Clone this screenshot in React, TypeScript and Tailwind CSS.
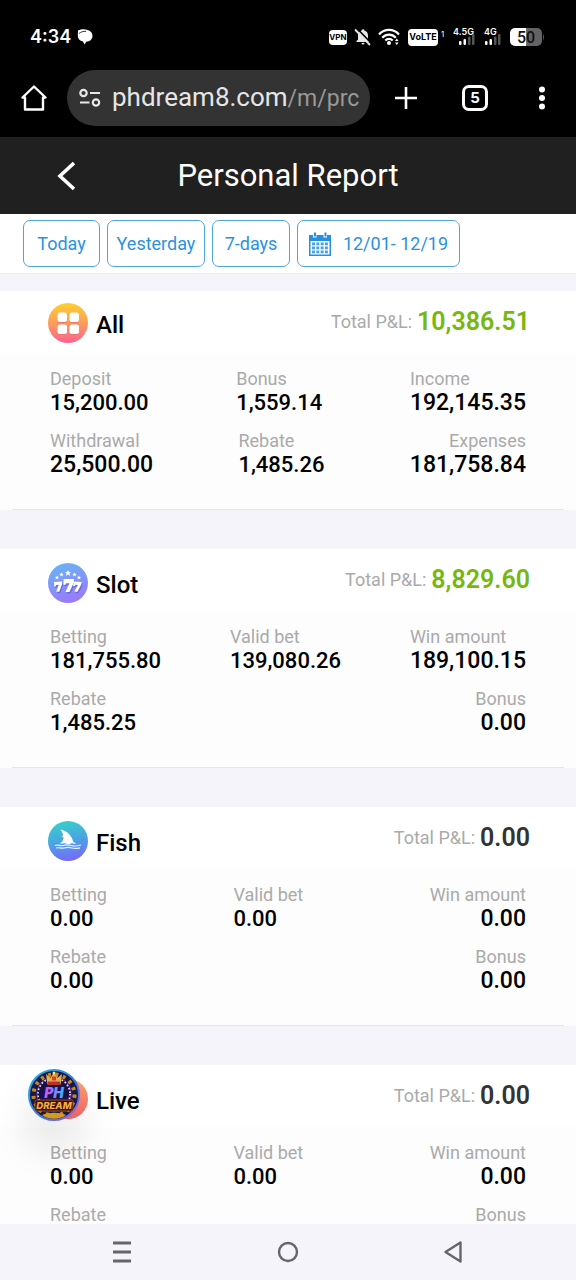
import type { ReactNode } from "react";

type Item = { label: string; value?: string; large?: boolean; align?: "left" | "right" };

interface Section {
  name: string;
  total: string;
  positive?: boolean;
  icon: ReactNode;
  rows: Item[][];
}

function AllIcon() {
  return (
    <svg className="size-10" viewBox="0 0 40 40" aria-hidden>
      <defs>
        <linearGradient id="all-bg" x1="0" y1="0" x2="0" y2="1">
          <stop offset="0" stopColor="#fdd02f" />
          <stop offset="0.5" stopColor="#fc9d5c" />
          <stop offset="1" stopColor="#fb6291" />
        </linearGradient>
      </defs>
      <circle cx="20" cy="20" r="20" fill="url(#all-bg)" />
      <g fill="#e9686a" opacity="0.6">
        <rect x="9.500" y="11" width="9.500" height="9.500" rx="2.500" />
        <rect x="21.500" y="11" width="9.500" height="9.500" rx="2.500" />
        <rect x="9.500" y="23" width="9.500" height="9" rx="2.500" />
        <rect x="21.500" y="23" width="9.500" height="9" rx="2.500" />
      </g>
      <g fill="#fff">
        <rect x="9.500" y="9.500" width="9.500" height="9.500" rx="2.500" />
        <rect x="21.500" y="9.500" width="9.500" height="9.500" rx="2.500" />
        <rect x="9.500" y="21.500" width="9.500" height="9.500" rx="2.500" />
        <rect x="21.500" y="21.500" width="9.500" height="9.500" rx="2.500" />
      </g>
    </svg>
  );
}

const SEVEN = "M0 0h8v2.500L4.600 10H1.500L4.600 3.200H2L1.600 4.400H0z";
const STAR = "M0-3 .9-.9 3-.8 1.400.6 2 2.800 0 1.600-2 2.800-1.400.6-3-.8-.9-.9z";

function SlotIcon() {
  return (
    <svg className="size-10" viewBox="0 0 40 40" aria-hidden>
      <defs>
        <linearGradient id="slot-bg" x1="0.3" y1="0" x2="0.6" y2="1">
          <stop offset="0" stopColor="#69b3f5" />
          <stop offset="1" stopColor="#9c78fc" />
        </linearGradient>
      </defs>
      <circle cx="20" cy="20" r="20" fill="url(#slot-bg)" />
      <g fill="#5b55c8" opacity="0.6" transform="translate(1 1.500)">
        <path d={SEVEN} transform="translate(6 19) rotate(-4)" />
        <path d={SEVEN} transform="translate(15.500 16) scale(1.300)" />
        <path d={SEVEN} transform="translate(25.500 18.500) rotate(4)" />
      </g>
      <g fill="#fff">
        <path d={SEVEN} transform="translate(6 19) rotate(-4)" />
        <path d={SEVEN} transform="translate(15.500 16) scale(1.300)" />
        <path d={SEVEN} transform="translate(25.500 18.500) rotate(4)" />
        <path d={STAR} transform="translate(20 10)" />
        <path d={STAR} transform="translate(13.500 11.500) scale(.7)" />
        <path d={STAR} transform="translate(26.500 11.500) scale(.7)" />
        <path d={STAR} transform="translate(9 14.500) scale(.7)" />
        <path d={STAR} transform="translate(31 14.500) scale(.7)" />
      </g>
    </svg>
  );
}

function FishIcon() {
  return (
    <svg className="size-10" viewBox="0 0 40 40" aria-hidden>
      <defs>
        <linearGradient id="fish-bg" x1="0.4" y1="0" x2="0.6" y2="1">
          <stop offset="0" stopColor="#36cfc9" />
          <stop offset="0.5" stopColor="#4ba3e3" />
          <stop offset="1" stopColor="#7a66fa" />
        </linearGradient>
      </defs>
      <circle cx="20" cy="20" r="20" fill="url(#fish-bg)" />
      <path
        d="M12 8.500c7 .8 11.500 6 13.500 12.500 1 .8 2 1.500 3 1.700-2.500.6-4-1-5.500-.2-2 1-3.500 1-5.200 0-1.500-.9-3 .6-6 0 2.500-1.500 3.700-3.500 3.800-6l-2-1.200 1.600-1-.6-2.300c-.6-1.400-1.400-2.500-2.600-3.500z"
        fill="#fff"
      />
      <path
        d="M7 24.500c3-1.500 5 .8 8 0s5-.8 8 0 6 .8 10-.5M8 27c3-1 5 .8 8 0s5-.8 8 0 5 .6 8-.2"
        fill="none"
        stroke="#e8f5ff"
        strokeWidth="1.200"
      />
    </svg>
  );
}

function LiveIcon() {
  return (
    <svg className="size-10" viewBox="0 0 40 40" aria-hidden>
      <defs>
        <linearGradient id="live-bg" x1="0" y1="0" x2="0" y2="1">
          <stop offset="0" stopColor="#fba56c" />
          <stop offset="1" stopColor="#f8656e" />
        </linearGradient>
      </defs>
      <circle cx="20" cy="20" r="20" fill="url(#live-bg)" />
    </svg>
  );
}

const SECTIONS: Section[] = [
  {
    name: "All",
    total: "10,386.51",
    positive: true,
    icon: <AllIcon />,
    rows: [
      [
        { label: "Deposit", value: "15,200.00" },
        { label: "Bonus", value: "1,559.14" },
        { label: "Income", value: "192,145.35", large: true },
      ],
      [
        { label: "Withdrawal", value: "25,500.00", large: true },
        { label: "Rebate", value: "1,485.26" },
        { label: "Expenses", value: "181,758.84", large: true, align: "right" },
      ],
    ],
  },
  {
    name: "Slot",
    total: "8,829.60",
    positive: true,
    icon: <SlotIcon />,
    rows: [
      [
        { label: "Betting", value: "181,755.80" },
        { label: "Valid bet", value: "139,080.26" },
        { label: "Win amount", value: "189,100.15", large: true },
      ],
      [
        { label: "Rebate", value: "1,485.25" },
        { label: "Bonus", value: "0.00", large: true, align: "right" },
      ],
    ],
  },
  {
    name: "Fish",
    total: "0.00",
    icon: <FishIcon />,
    rows: [
      [
        { label: "Betting", value: "0.00" },
        { label: "Valid bet", value: "0.00" },
        { label: "Win amount", value: "0.00", large: true, align: "right" },
      ],
      [
        { label: "Rebate", value: "0.00" },
        { label: "Bonus", value: "0.00", large: true, align: "right" },
      ],
    ],
  },
  {
    name: "Live",
    total: "0.00",
    icon: <LiveIcon />,
    rows: [
      [
        { label: "Betting", value: "0.00" },
        { label: "Valid bet", value: "0.00" },
        { label: "Win amount", value: "0.00", large: true, align: "right" },
      ],
      [{ label: "Rebate" }, { label: "Bonus", align: "right" }],
    ],
  },
];

function Signal({ label }: { label: string }) {
  return (
    <svg className="h-5 w-6" viewBox="0 0 24 20" aria-label={label}>
      <text x="0" y="8" fontSize="9" fontWeight="600" fill="#fff" fontFamily="Inter, sans-serif">
        {label}
      </text>
      <g transform={label === "4G" ? "translate(1 0)" : "translate(6 0)"}>
        <rect x="0" y="14" width="2.500" height="4" rx="1" fill="#fff" />
        <rect x="4.500" y="12" width="2.500" height="6" rx="1" fill="#fff" />
        <rect x="9" y="9.500" width="2.500" height="8.500" rx="1" fill="#555" />
        <rect x="13" y="7" width="2.500" height="11" rx="1" fill="#555" />
      </g>
    </svg>
  );
}

function StatusBar() {
  return (
    <div className="flex h-[70px] items-center justify-between pl-[30px] pr-8 pt-1">
      <div className="flex items-center gap-1.5">
        <span className="font-[Inter,sans-serif] text-lg font-semibold leading-6">4:34</span>
        <svg className="h-4 w-4" viewBox="0 0 16 16" aria-hidden>
          <path d="M1 1.500C5-.3 11-.3 14 3c2 2.300 2 6-.5 8.200-1.300 1-2.700 1.300-4 1.400L7.500 15.500 6 12.600C2.500 12 .6 9.500.8 6z" fill="#fff" />
          <path d="M2 4.500C4 2.800 6 2.300 9 2.300" stroke="#000" strokeWidth="0.8" fill="none" />
        </svg>
      </div>
      <div className="flex items-center">
        <span className="flex h-[15px] w-[18px] items-center justify-center rounded-sm bg-white font-[Inter,sans-serif] text-[8px] font-bold text-black">
          VPN
        </span>
        <svg className="ml-[7px] h-[18px] w-[18px]" viewBox="0 0 18 18" aria-label="Silent">
          <path d="M9 1.200a1.300 1.300 0 0 0-1.300 1.300C5.200 3.200 4 5 4 7.500v4L2.500 13v1h13v-1L14 11.500v-4c0-2.500-1.200-4.300-3.700-5A1.300 1.300 0 0 0 9 1.200zM7.500 15a1.500 1.500 0 0 0 3 0z" fill="#e8e8e8" />
          <path d="M2.500 0 18 16" stroke="#000" strokeWidth="1.600" />
          <path d="M1 1.500 16 17" stroke="#e8e8e8" strokeWidth="1.800" />
        </svg>
        <svg className="ml-1.5 h-[18px] w-[22px]" viewBox="0 0 22 18" fill="none" stroke="#fff" strokeWidth="2.200" aria-label="Wi-Fi">
          <path d="M1 6.500C6.500.4 15.500.4 21 6.500" />
          <path d="M4.200 9.800c4-4.200 9.600-4.200 13.600 0" />
          <path d="M7.300 12.600c2.200-2.300 5.200-2.300 7.400 0" />
          <circle cx="11" cy="15" r="2" fill="#fff" stroke="none" />
          <path d="m17 13 1.800-2.500 1.800 2.500zM17 14.500l1.800 2.500 1.800-2.500z" fill="#fff" stroke="none" />
        </svg>
        <span className="ml-2 flex h-[17px] w-[30px] items-center justify-center rounded-sm bg-white font-[Inter,sans-serif] text-[9px] font-bold text-black">
          VoLTE
        </span>
        <span className="ml-[3px] h-[17px] w-3 font-[Inter,sans-serif] text-[8px] leading-[10px]">1</span>
        <Signal label="4.5G" />
        <span className="ml-[7px] flex">
          <Signal label="4G" />
        </span>
        <svg className="ml-0.5 h-[18px] w-[34px]" viewBox="0 0 34 18" aria-label="Battery 50">
          <path d="M5 0H16.500V18H5a5 5 0 0 1-5-5V5a5 5 0 0 1 5-5z" fill="#fff" />
          <path d="M16.500 0H27a5 5 0 0 1 5 5v8a5 5 0 0 1-5 5H16.500z" fill="#636363" />
          <path d="M33 6c1.200 1.200 1.200 4.800 0 6z" fill="#636363" />
          <text x="7" y="15" fontSize="16" fontWeight="500" fontFamily="Roboto, sans-serif" fill="#111">
            50
          </text>
        </svg>
      </div>
    </div>
  );
}

function BrowserBar() {
  return (
    <div className="flex items-center pb-[11px] pl-5 pr-7">
      <button aria-label="Home" className="flex w-7 justify-center">
        <svg className="h-[26px] w-[26px]" viewBox="0 0 26 26" fill="none" stroke="#fff" strokeWidth="2.400" strokeLinejoin="round" strokeLinecap="round">
          <path d="M1.500 12.500 13 1.500l11.500 11H22v12H4v-12z" />
        </svg>
      </button>
      <button className="ml-[19px] flex h-14 min-w-0 flex-1 items-center rounded-full bg-[#333333] pl-3 pr-1.5 text-left">
        <svg className="h-5 w-[22px] shrink-0" viewBox="0 0 22 20" fill="none" stroke="#e8e8e8" strokeWidth="2.200" aria-hidden>
          <circle cx="4.500" cy="5" r="3.200" />
          <path d="M11 5h10M1 14.500h9.500" />
          <circle cx="17" cy="14.500" r="3.200" />
        </svg>
        <span className="ml-[11px] whitespace-nowrap text-[26px] leading-8 text-[#e6e6e6]">
          phdream8.com<span className="text-[23px] leading-8 text-[#999999]">/m/prc</span>
        </span>
      </button>
      <button aria-label="New tab" className="ml-6">
        <svg className="size-6" viewBox="0 0 24 24" stroke="#fff" strokeWidth="2.600">
          <path d="M12 1v22M1 12h22" />
        </svg>
      </button>
      <button
        aria-label="Tabs"
        className="ml-11 flex size-[26px] items-center justify-center rounded-[7px] border-[3px] border-white font-[Inter,sans-serif] text-[15px] font-bold leading-4"
      >
        5
      </button>
      <button aria-label="More" className="ml-12 flex w-3 justify-center">
        <svg className="h-6 w-2" viewBox="0 0 8 24" fill="#fff">
          <circle cx="4" cy="3.500" r="3" />
          <circle cx="4" cy="12" r="3" />
          <circle cx="4" cy="20.500" r="3" />
        </svg>
      </button>
    </div>
  );
}

function CalendarIcon() {
  return (
    <svg className="h-6 w-[22px]" viewBox="0 0 22 24" aria-hidden>
      <path d="M0 3h22v21H0z" fill="#268fdf" />
      <path d="M1.500 9h19v13.500h-19z" fill="#fff" />
      <path d="M4 1.500h3.500v4H4zM14.500 1.500H18v4h-3.500z" fill="#fff" />
      <path d="M5 .5h2v4H5zM15.500.5h2v4h-2z" fill="#268fdf" />
      <g fill="#4aa2e4">
        {[10.5, 14.5, 18.5].map(y =>
          [3, 7.3, 11.6, 15.9].map(x => <rect key={`${x}-${y}`} x={x} y={y} width="3" height="2.800" />)
        )}
      </g>
    </svg>
  );
}

const FILTER_CLASS =
  "flex h-[47px] items-center justify-center rounded-[7px] border border-[#4fa5e0] text-lg leading-6 text-[#2b92de]";

function Filters() {
  return (
    <div className="flex gap-[7px] border-b border-[#ececf0] bg-white px-[23px] py-1.5">
      <button className={`${FILTER_CLASS} w-[77px]`}>Today</button>
      <button className={`${FILTER_CLASS} w-[98px]`}>Yesterday</button>
      <button className={`${FILTER_CLASS} w-[78px]`}>7-days</button>
      <button className={`${FILTER_CLASS} w-[163px] gap-3`}>
        <CalendarIcon />
        12/01- 12/19
      </button>
    </div>
  );
}

function Stat({ label, value, large, align }: Item) {
  return (
    <div className={align === "right" ? "text-right" : ""}>
      <dt className="text-lg leading-6 text-[#aaaaaa]">{label}</dt>
      {value && (
        <dd className={`font-medium text-black ${large ? "text-[23px] leading-6" : "text-[22px] leading-6"}`}>{value}</dd>
      )}
    </div>
  );
}

function SectionCard({ name, total, positive, icon, rows }: Section) {
  return (
    <section className="group/card bg-[#fdfdfd]">
      <div className="flex h-[62px] items-center justify-between bg-white pl-12 pr-[46px]">
        <div className="flex items-center gap-2 pt-1.5 group-first/card:pt-0.5">
          {icon}
          <h2 className="pt-1 text-2xl font-medium text-black">{name}</h2>
        </div>
        <p className="flex items-center gap-[5px] text-lg text-[#aaaaaa]">
          Total P&amp;L:
          <span className={`text-[25px] font-semibold leading-8 ${positive ? "text-[#76b80e]" : "text-[#333333]"}`}>
            {total}
          </span>
        </p>
      </div>
      <dl className="flex flex-col gap-3.5 px-[50px] pb-8 pt-3.5">
        {rows.map((row, i) => (
          <div key={i} className="flex justify-between">
            {row.map(item => (
              <Stat key={item.label} {...item} />
            ))}
          </div>
        ))}
      </dl>
      <div className="mx-3 h-px bg-[#e6e6ea]" />
    </section>
  );
}

function FloatingLogo() {
  return (
    <a
      href="#home"
      aria-label="PH Dream"
      className="absolute bottom-[159px] left-7 size-[52px] rounded-full shadow-[0_26px_36px_6px_rgba(0,0,0,0.08)]"
    >
      <svg className="size-full" viewBox="0 0 52 52">
        <defs>
          <linearGradient id="ring" x1="0" y1="0" x2="1" y2="1">
            <stop offset="0" stopColor="#25b3e8" />
            <stop offset="0.6" stopColor="#3c78d8" />
            <stop offset="1" stopColor="#b25fd0" />
          </linearGradient>
          <linearGradient id="ph" x1="0" y1="0" x2="1" y2="0">
            <stop offset="0" stopColor="#e04ff0" />
            <stop offset="1" stopColor="#31b5ff" />
          </linearGradient>
        </defs>
        <circle cx="26" cy="26" r="25" fill="#151a4a" stroke="url(#ring)" strokeWidth="2" />
        <circle cx="26" cy="26" r="20.500" fill="none" stroke="#c58a1c" strokeWidth="4" strokeDasharray="3 4.500" />
        <circle cx="26" cy="25" r="17" fill="#191247" stroke="#7d2fa8" strokeWidth="1" />
        <circle cx="26" cy="25" r="16" fill="none" stroke="#ffd9f2" strokeWidth="1.600" strokeDasharray="1.600 2" />
        <path d="m18 5 4.500 4L26 3l3.500 6L34 5l-1.500 10.500h-13z" fill="#e9b04a" />
        <path d="M20 12.500h12V16H20z" fill="#b9312d" />
        <path d="M24 7.500h4v4h-4z" fill="#d93b36" />
        <circle cx="26" cy="4" r="1.500" fill="#ffe28a" />
        <path d="M14 46c7-3 17-3 24 0-6 5-18 5-24 0z" fill="#d49b20" />
        <rect x="7" y="31" width="38" height="11" rx="1.500" fill="#3d1020" stroke="#a85a24" strokeWidth="0.800" />
        <text x="26" y="29" textAnchor="middle" fontSize="14" fontWeight="900" fontStyle="italic" fontFamily="Inter, sans-serif" fill="url(#ph)">
          PH
        </text>
        <text x="26" y="40" textAnchor="middle" fontSize="9.500" fontWeight="800" fontStyle="italic" fontFamily="Inter, sans-serif" fill="#f5ad3c">
          DREAM
        </text>
      </svg>
    </a>
  );
}

function NavBar() {
  return (
    <nav className="grid h-14 shrink-0 grid-cols-3 items-center justify-items-center bg-[#f5f4fa] px-[39px]">
      <button aria-label="Recent apps">
        <svg className="h-6 w-5" viewBox="0 0 20 24" stroke="#66656b" strokeWidth="2.800" fill="none">
          <path d="M1 3h18M1 12h18M1 21h18" />
        </svg>
      </button>
      <button aria-label="Home screen">
        <svg className="size-6" viewBox="0 0 24 24" stroke="#66656b" strokeWidth="2.400" fill="none">
          <circle cx="12" cy="12" r="9" />
        </svg>
      </button>
      <button aria-label="Back">
        <svg className="size-6" viewBox="0 0 24 24" stroke="#66656b" strokeWidth="2.400" strokeLinejoin="round" fill="none">
          <path d="M3.500 12 18.500 2.500v19z" />
        </svg>
      </button>
    </nav>
  );
}

export default function App() {
  return (
    <div className="relative flex h-screen flex-col overflow-hidden bg-[#f5f4fa] font-[Roboto,sans-serif]">
      <div className="shrink-0 bg-black text-white">
        <StatusBar />
        <BrowserBar />
      </div>
      <header className="relative flex h-[77px] shrink-0 items-center justify-center bg-[#202020] text-white">
        <button aria-label="Go back" className="absolute left-14">
          <svg className="h-8 w-5" viewBox="0 0 20 32" fill="none" stroke="#fff" strokeWidth="3.600">
            <path d="M18 3 4 16l14 13" />
          </svg>
        </button>
        <h1 className="text-[31px] leading-10">Personal Report</h1>
      </header>
      <main className="min-h-0 flex-1 overflow-y-auto [scrollbar-width:none]">
        <Filters />
        <div className="flex flex-col gap-[39px] pt-[17px]">
          {SECTIONS.map(section => (
            <SectionCard key={section.name} {...section} />
          ))}
        </div>
      </main>
      <FloatingLogo />
      <NavBar />
    </div>
  );
}
